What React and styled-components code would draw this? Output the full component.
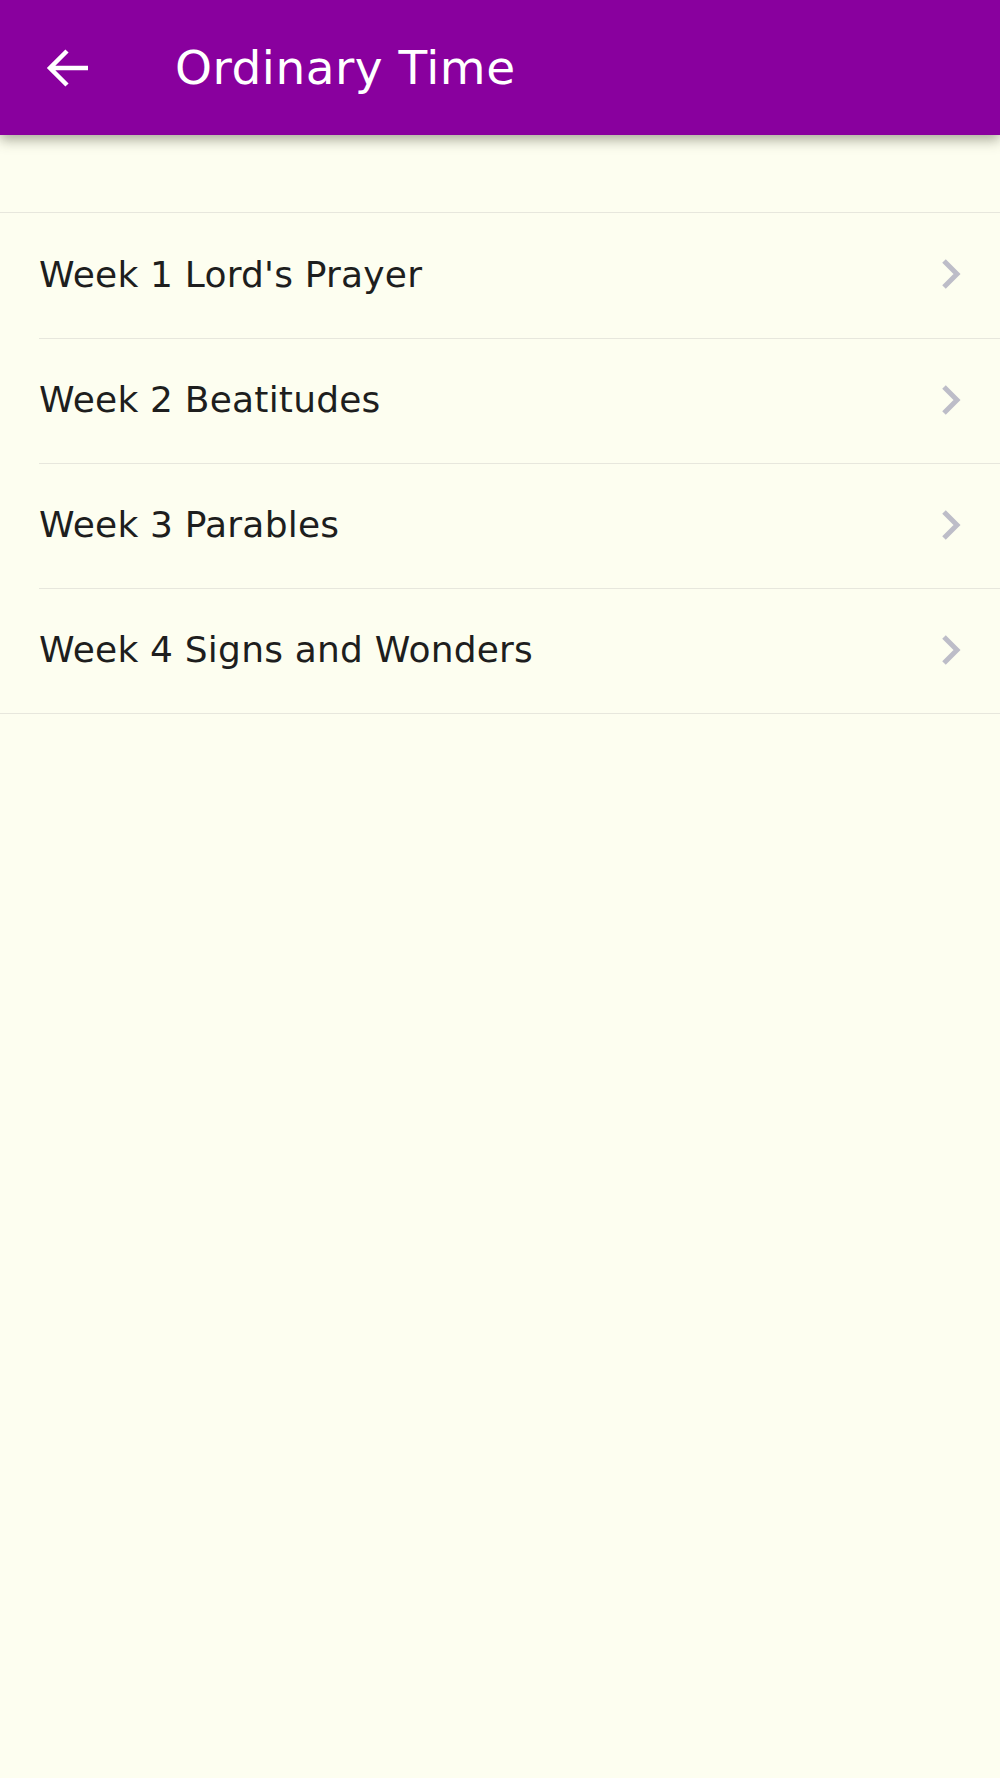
import styled, { createGlobalStyle } from "styled-components"

const GlobalStyle = createGlobalStyle`
  html, body {
    margin: 0;
    padding: 0;
    background: #fdfef0;
  }
  body {
    font-family: "DejaVu Sans", "Open Sans", sans-serif;
  }
`

const Page = styled.div`
  min-height: 1778px;
  background: #fdfef0;
`

const Toolbar = styled.header`
  height: 135px;
  background: #89009e;
  display: flex;
  align-items: center;
  box-shadow: 0 5px 12px rgba(70, 70, 50, 0.45);
  position: relative;
`

const BackButton = styled.button`
  width: 58px;
  height: 58px;
  margin-left: 39px;
  padding: 0;
  border: none;
  background: transparent;
  display: flex;
  align-items: center;
  justify-content: center;
  cursor: pointer;
`

const Title = styled.h1`
  margin: 0 0 0 78px;
  color: #ffffff;
  font-size: 47px;
  font-weight: 400;
  letter-spacing: 0.5px;
`

const List = styled.ul`
  list-style: none;
  margin: 77px 0 0;
  padding: 0;
  border-top: 1px solid #e7e7dd;
  border-bottom: 1px solid #e7e7dd;
`

const Row = styled.li`
  height: 125px;
  padding-left: 39px;
  cursor: pointer;
  & + & > div {
    border-top: 1px solid #e7e7dd;
  }
`

const RowInner = styled.div`
  height: 100%;
  box-sizing: border-box;
  display: flex;
  align-items: center;
  justify-content: space-between;
  padding-right: 38px;
  padding-bottom: 3px;
`

const Label = styled.span`
  font-size: 36px;
  color: #1e1e1e;
  letter-spacing: 0.2px;
`

const BackArrow = () => (
  <svg width="44" height="40" viewBox="0 0 44 40" fill="none">
    <path d="M42 20H4M21 3L4 20l17 17" stroke="#fff" strokeWidth="4.5" />
  </svg>
)

const Chevron = () => (
  <svg width="22" height="32" viewBox="0 0 22 32" fill="none">
    <path d="M4 3l13 13L4 29" stroke="#bdbdc8" strokeWidth="5" />
  </svg>
)

const weeks = [
  "Week 1 Lord's Prayer",
  "Week 2 Beatitudes",
  "Week 3 Parables",
  "Week 4 Signs and Wonders",
]

const App = () => {
  return (
    <Page>
      <GlobalStyle />
      <Toolbar>
        <BackButton>
          <BackArrow />
        </BackButton>
        <Title>Ordinary Time</Title>
      </Toolbar>
      <List>
        {weeks.map((w) => (
          <Row key={w}>
            <RowInner>
              <Label>{w}</Label>
              <Chevron />
            </RowInner>
          </Row>
        ))}
      </List>
    </Page>
  )
}

export default App
